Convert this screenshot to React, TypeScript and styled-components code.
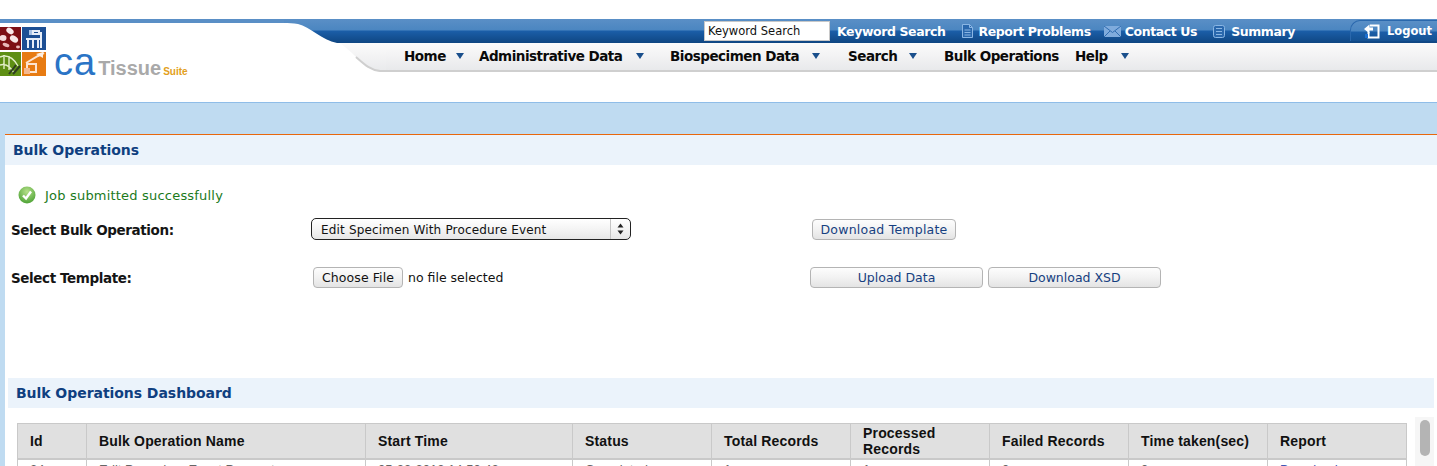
import * as React from 'react';
import styled, { createGlobalStyle } from 'styled-components';

const GlobalStyle = createGlobalStyle`
    html, body {
        margin: 0;
        padding: 0;
        height: 466px;
        overflow: hidden;
        background: #ffffff;
        font-family: "DejaVu Sans", Verdana, sans-serif;
    }
`;

const BAR_GRADIENT = 'linear-gradient(180deg, #5a8fc6 0px, #4b86c1 11px, #1b5ea8 12px, #0f4682 24px)';

const Page = styled.div`
    height: 466px;
    overflow: hidden;
    padding-top: 19px;
    box-sizing: border-box;
`;

const Masthead = styled.header`
    height: 83px;
    display: grid;
    grid-template-columns: 284px 1fr;
`;

const LogoColumn = styled.div`
    border-top: 4px solid #5a8fc6;
    padding-top: 4px;
    display: flex;
    align-items: flex-end;
    height: 49px;
`;

const LogoName = styled.div`
    display: flex;
    align-items: baseline;
    margin: 0 0 -1px 8px;
    font-family: "Liberation Sans", Arial, sans-serif;
    line-height: 30px;
    height: 30px;
`;

const LogoCa = styled.span`
    font-size: 38px;
    color: #2a74c6;
    letter-spacing: 1px;
`;

const LogoTissue = styled.span`
    font-size: 20px;
    font-weight: bold;
    color: #a9a9a9;
    margin-left: 2px;
`;

const LogoSuite = styled.span`
    font-size: 10px;
    font-weight: bold;
    color: #e3a020;
    margin-left: 2px;
`;

const RightColumn = styled.div`
    display: flex;
    flex-direction: column;
    min-width: 0;
`;

const TopRow = styled.div`
    height: 24px;
    display: flex;
`;

const TopBar = styled.div`
    flex: 1;
    display: flex;
    align-items: center;
    background: ${BAR_GRADIENT};
    padding-left: 367px;
`;

const SearchInput = styled.input`
    width: 126px;
    height: 20px;
    margin: 0 7px 0 0;
    box-sizing: border-box;
    border: 1px solid #c8c8c8;
    padding: 0 3px;
    font-family: "DejaVu Sans", sans-serif;
    font-size: 11.5px;
    color: #111111;
    background: #ffffff;
    outline: none;
`;

const TopLink = styled.a<{ $gap?: number }>`
    display: flex;
    align-items: center;
    margin-left: ${p => p.$gap ?? 0}px;
    font-size: 12.5px;
    font-weight: bold;
    color: #ffffff;
    white-space: nowrap;
    letter-spacing: -0.4px;
`;

const TopIcon = styled.svg`
    margin-right: 4px;
    flex: none;
`;

const LogoutTab = styled.a`
    margin-left: auto;
    align-self: flex-end;
    width: 87px;
    height: 21px;
    margin-bottom: 2px;
    box-sizing: border-box;
    display: flex;
    align-items: center;
    padding-left: 13px;
    border: 1px solid #2a68ad;
    border-right: 0;
    border-bottom: 0;
    border-top-left-radius: 10px;
    background: linear-gradient(180deg, #5a8fc6 0px, #4b86c1 10px, #1b5ea8 11px, #14508f 21px);
    font-size: 11.5px;
    font-weight: bold;
    color: #ffffff;
`;

const NavRow = styled.div`
    height: 29px;
    display: flex;
    margin-left: 56px;
`;

const NavBar = styled.nav`
    flex: 1;
    display: flex;
    align-items: center;
    background: linear-gradient(180deg, #fbfbfb 0%, #f3f3f4 45%, #e8e9eb 100%);
    border-bottom: 2px solid #cfcfcf;
    box-sizing: border-box;
    padding: 0 0 2px 18px;
`;

const NavItem = styled.a<{ $width: number }>`
    width: ${p => p.$width}px;
    flex: none;
    display: flex;
    align-items: center;
    font-size: 13.5px;
    font-weight: bold;
    color: #0a0a0a;
    white-space: nowrap;
    letter-spacing: -0.5px;
`;

const NavCaret = styled.span<{ $gap: number }>`
    margin-left: ${p => p.$gap}px;
    width: 0;
    height: 0;
    border-left: 4px solid transparent;
    border-right: 4px solid transparent;
    border-top: 6px solid #1a4f8c;
`;

const Band = styled.div`
    height: 31px;
    background: #bfdbf1;
    border-top: 1px solid #8fbde8;
`;

const Workspace = styled.main`
    height: 332px;
    padding-left: 5px;
    background: #bfdbf1;
`;

const Sheet = styled.div`
    height: 100%;
    background: #ffffff;
    border-top: 1px solid #e8670c;
    box-sizing: border-box;
`;

const SectionTitle = styled.h2<{ $inset: number }>`
    margin: 0;
    height: 30px;
    line-height: 30px;
    padding-left: ${p => p.$inset}px;
    background: #ebf3fb;
    font-size: 14px;
    font-weight: bold;
    color: #0f3f80;
    letter-spacing: -0.05px;
`;

const Message = styled.div`
    display: flex;
    align-items: center;
    height: 18px;
    margin: 21px 0 0 13px;
    font-size: 13px;
    letter-spacing: 0.2px;
    color: #1b7a1b;
`;

const CheckIcon = styled.svg`
    margin-right: 9px;
`;

const FormRow = styled.div<{ $top: number }>`
    display: grid;
    grid-template-columns: 300px 499px 1fr;
    align-items: center;
    height: 22px;
    margin: ${p => p.$top}px 0 0 6px;
`;

const FieldLabel = styled.label`
    padding-top: 1px;
    font-size: 13.5px;
    font-weight: bold;
    color: #151515;
    letter-spacing: -0.4px;
`;

const SelectWrap = styled.div`
    position: relative;
    width: 320px;
    height: 22px;
`;

const Select = styled.select`
    appearance: none;
    width: 100%;
    height: 100%;
    box-sizing: border-box;
    border: 1px solid #222222;
    border-radius: 5px;
    padding: 1px 0 0 9px;
    font-family: "DejaVu Sans", sans-serif;
    font-size: 12px;
    letter-spacing: 0.17px;
    color: #111111;
    background: linear-gradient(180deg, #ffffff 0%, #f4f4f4 50%, #e6e6e6 100%);
`;

const SelectArrows = styled.svg`
    position: absolute;
    right: 0;
    top: 1px;
    pointer-events: none;
`;

const FileField = styled.div`
    display: flex;
    align-items: center;
    padding-left: 2px;
    font-size: 12.5px;
    color: #111111;
`;

const Button = styled.button<{ $width: number; $dark?: boolean }>`
    width: ${p => p.$width}px;
    height: 21px;
    padding: 1px 0 0;
    box-sizing: border-box;
    border: 1px solid #b4b4b4;
    border-radius: 4px;
    background: linear-gradient(180deg, #fdfdfd 0%, #f2f2f2 50%, #e4e4e4 100%);
    font-family: "DejaVu Sans", sans-serif;
    font-size: 12.5px;
    color: ${p => (p.$dark ? '#111111' : '#163f80')};
`;

const ChooseButton = styled(Button)`
    margin-right: 5px;
    letter-spacing: 0.1px;
`;

const TemplateButton = styled(Button)`
    letter-spacing: 0.23px;
`;

const Actions = styled.div<{ $inset: number }>`
    display: flex;
    gap: 5px;
    padding-left: ${p => p.$inset}px;
`;

const DashboardTitle = styled(SectionTitle)`
    margin: 90px 3px 0 3px;
`;

const Dashboard = styled.div`
    display: flex;
    padding: 9px 3px 0 12px;
`;

const TableBox = styled.div`
    margin-top: 6px;
    width: 1389px;
    flex: none;
`;

const Table = styled.table`
    width: 100%;
    table-layout: fixed;
    border-collapse: collapse;
    font-family: "Liberation Sans", Arial, sans-serif;
`;

const HeadCell = styled.th`
    height: 35px;
    box-sizing: border-box;
    padding: 0 12px;
    background: #e0e0e0;
    border: 1px solid #c9c9c9;
    border-bottom-width: 2px;
    text-align: left;
    font-size: 14px;
    line-height: 16px;
    font-weight: bold;
    letter-spacing: 0.17px;
    color: #111111;
`;

const BodyCell = styled.td`
    padding: 2px 12px 3px;
    border: 1px solid #c9c9c9;
    border-top: 0;
    font-size: 13px;
    color: #666666;
    white-space: nowrap;
`;

const ReportLink = styled.a`
    color: #3f55b5;
`;

const ScrollTrack = styled.div`
    margin-left: 9px;
    width: 19px;
    height: 60px;
    background: #f6f6f6;
    display: flex;
    justify-content: center;
    padding-top: 3px;
    box-sizing: border-box;
`;

const ScrollThumb = styled.div`
    width: 10px;
    height: 36px;
    border-radius: 5px;
    background: #b4b4b4;
`;

const columns = [
    { label: 'Id', width: 69, value: '24' },
    { label: 'Bulk Operation Name', width: 279, value: 'Edit Procedure Event Parameters' },
    { label: 'Start Time', width: 207, value: '05-23-2013 14:50:42' },
    { label: 'Status', width: 139, value: 'Completed' },
    { label: 'Total Records', width: 139, value: '1' },
    { label: 'Processed Records', width: 139, value: '1' },
    { label: 'Failed Records', width: 139, value: '0' },
    { label: 'Time taken(sec)', width: 139, value: '0' },
    { label: 'Report', width: 139, value: 'Download' },
];

const navItems = [
    { label: 'Home', width: 75, caret: 10 },
    { label: 'Administrative Data', width: 191, caret: 14 },
    { label: 'Biospecimen Data', width: 178, caret: 13 },
    { label: 'Search', width: 96, caret: 12 },
    { label: 'Bulk Operations', width: 131 },
    { label: 'Help', width: 70, caret: 13 },
];

const LogoTiles = () => (
    <svg width="46" height="49" viewBox="0 0 46 49">
        <rect x="0" y="0" width="21" height="23" fill="#7d0f14" />
        <ellipse cx="3" cy="11" rx="3.5" ry="3" fill="#f4dcdc" />
        <ellipse cx="10" cy="4" rx="4" ry="2.8" fill="#f8e8e8" transform="rotate(35 10 4)" />
        <ellipse cx="14" cy="12" rx="4.5" ry="3" fill="#f8e8e8" transform="rotate(35 14 12)" />
        <ellipse cx="6" cy="18" rx="3.5" ry="1.8" fill="#e8b8b8" transform="rotate(20 6 18)" />
        <ellipse cx="18" cy="20" rx="2" ry="1.4" fill="#e8b8b8" />
        <rect x="22" y="0" width="24" height="23" fill="#1d4f94" />
        <path d="M26 12h15M28 12v9M33 12v9M38 12v9M41 5v16M33 4h6v3h-6z" stroke="#e8eef8" strokeWidth="2" fill="none" />
        <rect x="29" y="3" width="3" height="5" fill="#a9c3e6" />
        <rect x="0" y="25" width="21" height="24" fill="#5e8f14" />
        <path d="M0 30c8-3 14 2 18 9M0 38c6-2 10 1 14 8M4 28v14M9 29v14" stroke="#e3efc8" strokeWidth="1.4" fill="none" />
        <path d="M9 47l7-9M13 47l7-8" stroke="#2f3f20" strokeWidth="2" />
        <rect x="22" y="25" width="24" height="24" fill="#e77b12" />
        <path d="M26 36l12-7 6-3M27 37h9v8h-9z" stroke="#fde4d0" strokeWidth="2" fill="none" />
        <path d="M24 41h6v6h-6z" fill="#f5b890" />
        <path d="M36 27l7-2v6z" fill="#fbeee2" />
    </svg>
);

const TopCurve = () => (
    <svg width="53" height="24" viewBox="0 0 53 24">
        <defs>
            <linearGradient id="barFill" x1="0" y1="0" x2="0" y2="1">
                <stop offset="0" stopColor="#5a8fc6" />
                <stop offset="0.46" stopColor="#4b86c1" />
                <stop offset="0.5" stopColor="#1b5ea8" />
                <stop offset="1" stopColor="#0f4682" />
            </linearGradient>
        </defs>
        <path d="M0 0H53V24C38 21 26 8 14 5C9 4 5 4 0 4Z" fill="url(#barFill)" />
    </svg>
);

const NavCurve = () => (
    <svg width="46" height="29" viewBox="0 0 46 29">
        <defs>
            <linearGradient id="navFill" x1="0" y1="0" x2="0" y2="1">
                <stop offset="0" stopColor="#fbfbfb" />
                <stop offset="0.45" stopColor="#f3f3f4" />
                <stop offset="1" stopColor="#e8e9eb" />
            </linearGradient>
        </defs>
        <path d="M0 0H46V29H40C30 27 24 21 16 14C10 8 5 4 0 0Z" fill="url(#navFill)" />
        <path d="M16 14C24 21 30 27 40 28H46" stroke="#cfcfcf" strokeWidth="2" fill="none" />
    </svg>
);

const ReportIcon = () => (
    <TopIcon width="13" height="14" viewBox="0 0 13 14">
        <path d="M1.5 .5H8.5L11.5 3.5V13.5H1.5Z" fill="#2a68ad" stroke="#8ab6e4" />
        <path d="M8.5 .5V3.5H11.5M3.5 6H9.5M3.5 8.5H9.5M3.5 11H9.5" stroke="#8ab6e4" fill="none" />
    </TopIcon>
);

const MailIcon = () => (
    <TopIcon width="17" height="11" viewBox="0 0 17 11">
        <rect x="0" y="0" width="17" height="11" fill="#7fabdc" />
        <path d="M0 0L8.5 6.5L17 0M0 11L6 5M17 11L11 5" stroke="#2f6cb0" fill="none" />
    </TopIcon>
);

const SummaryIcon = () => (
    <TopIcon width="12" height="13" viewBox="0 0 12 13" style={{ marginRight: 6 }}>
        <rect x=".5" y=".5" width="11" height="12" rx="2" fill="#2a68ad" stroke="#8ab6e4" />
        <path d="M3 3.5H9M3 6.5H9M3 9.5H9" stroke="#8ab6e4" />
    </TopIcon>
);

const LogoutIcon = () => (
    <TopIcon width="16" height="16" viewBox="0 0 16 16" style={{ marginRight: 7 }}>
        <path d="M6 2.5H14.5V14.5H4.5V9" stroke="#ffffff" strokeWidth="2" fill="none" />
        <path d="M0 6L5.5 1.5V4.5H9V7.5H5.5V10.5Z" fill="#ffffff" />
        <rect x="1" y="11" width="3" height="4" fill="#1b6fd0" />
    </TopIcon>
);

const SuccessIcon = () => (
    <CheckIcon width="18" height="18" viewBox="0 0 18 18">
        <defs>
            <radialGradient id="okFill" cx="0.5" cy="0.3" r="0.8">
                <stop offset="0" stopColor="#b6e08a" />
                <stop offset="1" stopColor="#3f9a2a" />
            </radialGradient>
        </defs>
        <circle cx="9" cy="9" r="8.5" fill="url(#okFill)" />
        <path d="M5 9.5L8 12.5L13 5.5" stroke="#ffffff" strokeWidth="2.4" fill="none" />
    </CheckIcon>
);

const App: React.FunctionComponent = () => {
    return (
        <Page>
            <GlobalStyle />
            <Masthead>
                <LogoColumn>
                    <LogoTiles />
                    <LogoName>
                        <LogoCa>ca</LogoCa>
                        <LogoTissue>Tissue</LogoTissue>
                        <LogoSuite>Suite</LogoSuite>
                    </LogoName>
                </LogoColumn>
                <RightColumn>
                    <TopRow>
                        <TopCurve />
                        <TopBar>
                            <SearchInput readOnly value="Keyword Search" />
                            <TopLink>Keyword Search</TopLink>
                            <TopLink $gap={16}><ReportIcon />Report Problems</TopLink>
                            <TopLink $gap={13}><MailIcon />Contact Us</TopLink>
                            <TopLink $gap={16}><SummaryIcon />Summary</TopLink>
                            <LogoutTab><LogoutIcon />Logout</LogoutTab>
                        </TopBar>
                    </TopRow>
                    <NavRow>
                        <NavCurve />
                        <NavBar>
                            {navItems.map(item => (
                                <NavItem key={item.label} $width={item.width}>
                                    {item.label}
                                    {item.caret && <NavCaret $gap={item.caret} />}
                                </NavItem>
                            ))}
                        </NavBar>
                    </NavRow>
                </RightColumn>
            </Masthead>
            <Band />
            <Workspace>
                <Sheet>
                    <SectionTitle $inset={8}>Bulk Operations</SectionTitle>
                    <Message><SuccessIcon />Job submitted successfully</Message>
                    <FormRow $top={14}>
                        <FieldLabel>Select Bulk Operation:</FieldLabel>
                        <SelectWrap>
                            <Select defaultValue="edit">
                                <option value="edit">Edit Specimen With Procedure Event</option>
                            </Select>
                            <SelectArrows width="21" height="20" viewBox="0 0 21 20">
                                <rect x="0" y="0" width="1" height="20" fill="#c4c4c4" />
                                <path d="M7.5 8.5L10.5 4.5L13.5 8.5ZM7.5 11.5L10.5 15.5L13.5 11.5Z" fill="#222222" />
                            </SelectArrows>
                        </SelectWrap>
                        <Actions $inset={2}>
                            <TemplateButton $width={144}>Download Template</TemplateButton>
                        </Actions>
                    </FormRow>
                    <FormRow $top={26}>
                        <FieldLabel>Select Template:</FieldLabel>
                        <FileField>
                            <ChooseButton type="button" $width={90} $dark>Choose File</ChooseButton>
                            no file selected
                        </FileField>
                        <Actions $inset={0}>
                            <Button $width={173}>Upload Data</Button>
                            <Button $width={173}>Download XSD</Button>
                        </Actions>
                    </FormRow>
                    <DashboardTitle $inset={8}>Bulk Operations Dashboard</DashboardTitle>
                    <Dashboard>
                        <TableBox>
                            <Table>
                                <colgroup>
                                    {columns.map(col => <col key={col.label} width={col.width} />)}
                                </colgroup>
                                <thead>
                                    <tr>
                                        {columns.map(col => <HeadCell key={col.label}>{col.label}</HeadCell>)}
                                    </tr>
                                </thead>
                                <tbody>
                                    <tr>
                                        {columns.map(col => (
                                            <BodyCell key={col.label}>
                                                {col.label === 'Report' ? <ReportLink>{col.value}</ReportLink> : col.value}
                                            </BodyCell>
                                        ))}
                                    </tr>
                                </tbody>
                            </Table>
                        </TableBox>
                        <ScrollTrack><ScrollThumb /></ScrollTrack>
                    </Dashboard>
                </Sheet>
            </Workspace>
        </Page>
    );
};

export default App;
